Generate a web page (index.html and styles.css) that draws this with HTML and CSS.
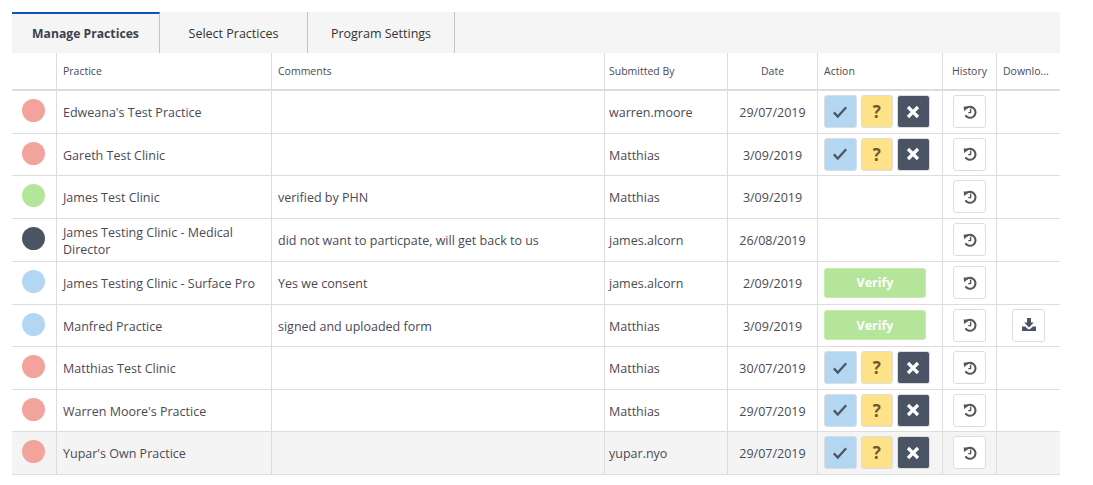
FILE: index.html
```html
<!DOCTYPE html>
<html>

<head>
    <title>Manage Practices</title>
    <link rel="stylesheet" href="styles.css">
</head>

<body>
    <svg class="icon-defs" width="0" height="0">
        <symbol id="icon-check" viewBox="0 0 14 14">
            <path d="M.8 7.4l4 4.2L13.2 2.2" fill="none" stroke="currentColor" stroke-width="2.3" />
        </symbol>
        <symbol id="icon-times" viewBox="0 0 14 14">
            <path d="M2 2l10 10M12 2L2 12" fill="none" stroke="currentColor" stroke-width="3.2" />
        </symbol>
        <symbol id="icon-history" viewBox="0 0 14 14">
            <path d="M3.4 3.1A5.5 5.5 0 1 1 2.4 10.4" fill="none" stroke="currentColor" stroke-width="2.1" />
            <path d="M.6 1.4L6.4 1.6L1.2 6.2Z" fill="currentColor" />
            <path d="M7.6 3.8v3.8H5.2" fill="none" stroke="currentColor" stroke-width="1.4" />
        </symbol>
        <symbol id="icon-download" viewBox="0 0 14 14">
            <path d="M5 0h4v4.6h2.8L7 9.6 2.2 4.6H5z" fill="currentColor" />
            <path d="M0 8.6h3.2L6 11.2h2l2.8-2.6H14V13H0z" fill="currentColor" />
        </symbol>
    </svg>

    <div class="page">
        <div class="tabs">
            <a class="tab active">Manage Practices</a>
            <a class="tab">Select Practices</a>
            <a class="tab">Program Settings</a>
        </div>

        <table class="grid">
            <colgroup>
                <col class="col-status">
                <col class="col-practice">
                <col class="col-comments">
                <col class="col-user">
                <col class="col-date">
                <col class="col-action">
                <col class="col-history">
                <col class="col-download">
            </colgroup>
            <thead>
                <tr>
                    <th></th>
                    <th>Practice</th>
                    <th>Comments</th>
                    <th class="user">Submitted By</th>
                    <th class="center">Date</th>
                    <th>Action</th>
                    <th class="center">History</th>
                    <th class="truncate">Downlo...</th>
                </tr>
            </thead>
            <tbody>
                <tr>
                    <td><span class="dot red"></span></td>
                    <td>Edweana's Test Practice</td>
                    <td></td>
                    <td class="user">warren.moore</td>
                    <td class="center">29/07/2019</td>
                    <td>
                        <div class="actions">
                            <button class="btn blue"><svg class="ico"><use href="#icon-check" /></svg></button>
                            <button class="btn yellow">?</button>
                            <button class="btn dark"><svg class="ico"><use href="#icon-times" /></svg></button>
                        </div>
                    </td>
                    <td class="center"><button class="btn plain"><svg class="ico"><use href="#icon-history" /></svg></button></td>
                    <td></td>
                </tr>
                <tr>
                    <td><span class="dot red"></span></td>
                    <td>Gareth Test Clinic</td>
                    <td></td>
                    <td class="user">Matthias</td>
                    <td class="center">3/09/2019</td>
                    <td>
                        <div class="actions">
                            <button class="btn blue"><svg class="ico"><use href="#icon-check" /></svg></button>
                            <button class="btn yellow">?</button>
                            <button class="btn dark"><svg class="ico"><use href="#icon-times" /></svg></button>
                        </div>
                    </td>
                    <td class="center"><button class="btn plain"><svg class="ico"><use href="#icon-history" /></svg></button></td>
                    <td></td>
                </tr>
                <tr>
                    <td><span class="dot green"></span></td>
                    <td>James Test Clinic</td>
                    <td>verified by PHN</td>
                    <td class="user">Matthias</td>
                    <td class="center">3/09/2019</td>
                    <td></td>
                    <td class="center"><button class="btn plain"><svg class="ico"><use href="#icon-history" /></svg></button></td>
                    <td></td>
                </tr>
                <tr class="tall">
                    <td><span class="dot navy"></span></td>
                    <td>James Testing Clinic - Medical Director</td>
                    <td>did not want to particpate, will get back to us</td>
                    <td class="user">james.alcorn</td>
                    <td class="center">26/08/2019</td>
                    <td></td>
                    <td class="center"><button class="btn plain"><svg class="ico"><use href="#icon-history" /></svg></button></td>
                    <td></td>
                </tr>
                <tr>
                    <td><span class="dot sky"></span></td>
                    <td>James Testing Clinic - Surface Pro</td>
                    <td>Yes we consent</td>
                    <td class="user">james.alcorn</td>
                    <td class="center">2/09/2019</td>
                    <td><button class="btn verify">Verify</button></td>
                    <td class="center"><button class="btn plain"><svg class="ico"><use href="#icon-history" /></svg></button></td>
                    <td></td>
                </tr>
                <tr>
                    <td><span class="dot sky"></span></td>
                    <td>Manfred Practice</td>
                    <td>signed and uploaded form</td>
                    <td class="user">Matthias</td>
                    <td class="center">3/09/2019</td>
                    <td><button class="btn verify">Verify</button></td>
                    <td class="center"><button class="btn plain"><svg class="ico"><use href="#icon-history" /></svg></button></td>
                    <td class="center"><button class="btn plain"><svg class="ico navy-ico"><use href="#icon-download" /></svg></button></td>
                </tr>
                <tr>
                    <td><span class="dot red"></span></td>
                    <td>Matthias Test Clinic</td>
                    <td></td>
                    <td class="user">Matthias</td>
                    <td class="center">30/07/2019</td>
                    <td>
                        <div class="actions">
                            <button class="btn blue"><svg class="ico"><use href="#icon-check" /></svg></button>
                            <button class="btn yellow">?</button>
                            <button class="btn dark"><svg class="ico"><use href="#icon-times" /></svg></button>
                        </div>
                    </td>
                    <td class="center"><button class="btn plain"><svg class="ico"><use href="#icon-history" /></svg></button></td>
                    <td></td>
                </tr>
                <tr>
                    <td><span class="dot red"></span></td>
                    <td>Warren Moore's Practice</td>
                    <td></td>
                    <td class="user">Matthias</td>
                    <td class="center">29/07/2019</td>
                    <td>
                        <div class="actions">
                            <button class="btn blue"><svg class="ico"><use href="#icon-check" /></svg></button>
                            <button class="btn yellow">?</button>
                            <button class="btn dark"><svg class="ico"><use href="#icon-times" /></svg></button>
                        </div>
                    </td>
                    <td class="center"><button class="btn plain"><svg class="ico"><use href="#icon-history" /></svg></button></td>
                    <td></td>
                </tr>
                <tr class="hover">
                    <td><span class="dot red"></span></td>
                    <td>Yupar's Own Practice</td>
                    <td></td>
                    <td class="user">yupar.nyo</td>
                    <td class="center">29/07/2019</td>
                    <td>
                        <div class="actions">
                            <button class="btn blue"><svg class="ico"><use href="#icon-check" /></svg></button>
                            <button class="btn yellow">?</button>
                            <button class="btn dark"><svg class="ico"><use href="#icon-times" /></svg></button>
                        </div>
                    </td>
                    <td class="center"><button class="btn plain"><svg class="ico"><use href="#icon-history" /></svg></button></td>
                    <td></td>
                </tr>
            </tbody>
        </table>
    </div>
</body>

</html>
```

FILE: styles.css
```css
/* General Styles */
body {
    margin: 0;
    padding: 12px 33px 0 12px;
    background-color: #fff;
    color: #4a4a55;
    font-family: "Open Sans", "Noto Sans", sans-serif;
    font-size: 12.5px;
}

.icon-defs {
    position: absolute;
}

/* Tabs */
.tabs {
    display: flex;
    height: 41px;
    background-color: #f5f5f5;
}

.tab {
    box-sizing: border-box;
    width: 148px;
    border-right: 1px solid #c4c4c4;
    line-height: 43px;
    text-align: center;
    color: #333;
}

.tab:last-child {
    width: 147px;
}

.tab.active {
    border-top: 2px solid #0f55b5;
    line-height: 39px;
    font-size: 12.2px;
    font-weight: 700;
    color: #3a4252;
}

/* Table */
.grid {
    width: 1048px;
    table-layout: fixed;
    border-collapse: separate;
    border-spacing: 0;
}

.col-status { width: 45px; }
.col-practice { width: 215px; }
.col-comments { width: 333px; }
.col-user { width: 123px; }
.col-date { width: 90px; }
.col-action { width: 125px; }
.col-history { width: 54px; }
.col-download { width: 63px; }

.grid th {
    height: 36px;
    padding: 0 6px;
    border-right: 1px solid #ddd;
    border-bottom: 2px solid #ddd;
    font-size: 10.5px;
    font-weight: 400;
    text-align: left;
    white-space: nowrap;
}

.grid td {
    box-sizing: border-box;
    height: 42.5px;
    padding: 2px 6px 0;
    border-right: 1px solid #ddd;
    border-bottom: 1px solid #ddd;
    line-height: 17px;
}

.grid .tall td {
    height: 43.5px;
}

.grid th:last-child,
.grid td:last-child {
    border-right: none;
}

.grid .center {
    text-align: center;
}

.grid .user {
    padding-left: 4px;
}

.grid .hover td {
    background-color: #f4f4f4;
}

/* Status dots */
.dot {
    display: block;
    width: 23px;
    height: 23px;
    margin: -4px 0 0 4px;
    border-radius: 50%;
}

.red { background-color: #f2a39c; }
.green { background-color: #b5e59a; }
.navy { background-color: #4a5464; }
.sky { background-color: #b3d7f3; }

/* Buttons */
.actions {
    display: flex;
    gap: 4px;
    margin-top: -2px;
}

.btn {
    display: inline-flex;
    box-sizing: border-box;
    align-items: center;
    justify-content: center;
    width: 33px;
    height: 33px;
    margin-top: -2px;
    padding: 0;
    border: 1px solid #ddd;
    border-radius: 3px;
    background-color: #fff;
    vertical-align: middle;
    font-family: inherit;
}

.actions .btn {
    width: 32.6px;
    margin-top: 0;
}

.ico {
    width: 14px;
    height: 14px;
    color: #5b5558;
}

.btn.blue {
    background-color: #b3d7f3;
}

.btn.blue .ico {
    color: #4f5560;
}

.btn.yellow {
    background-color: #fde28a;
    color: #6b5a2c;
    font-size: 17px;
    font-weight: 700;
}

.btn.dark {
    background-color: #4a5464;
}

.btn.dark .ico {
    color: #fff;
}

.btn.verify {
    width: 102px;
    height: 30px;
    border-color: #c8e8b4;
    background-color: #b5e59a;
    color: #fff;
    font-size: 12.5px;
    font-weight: 700;
}

.btn.plain .navy-ico {
    color: #4a5464;
}
```
